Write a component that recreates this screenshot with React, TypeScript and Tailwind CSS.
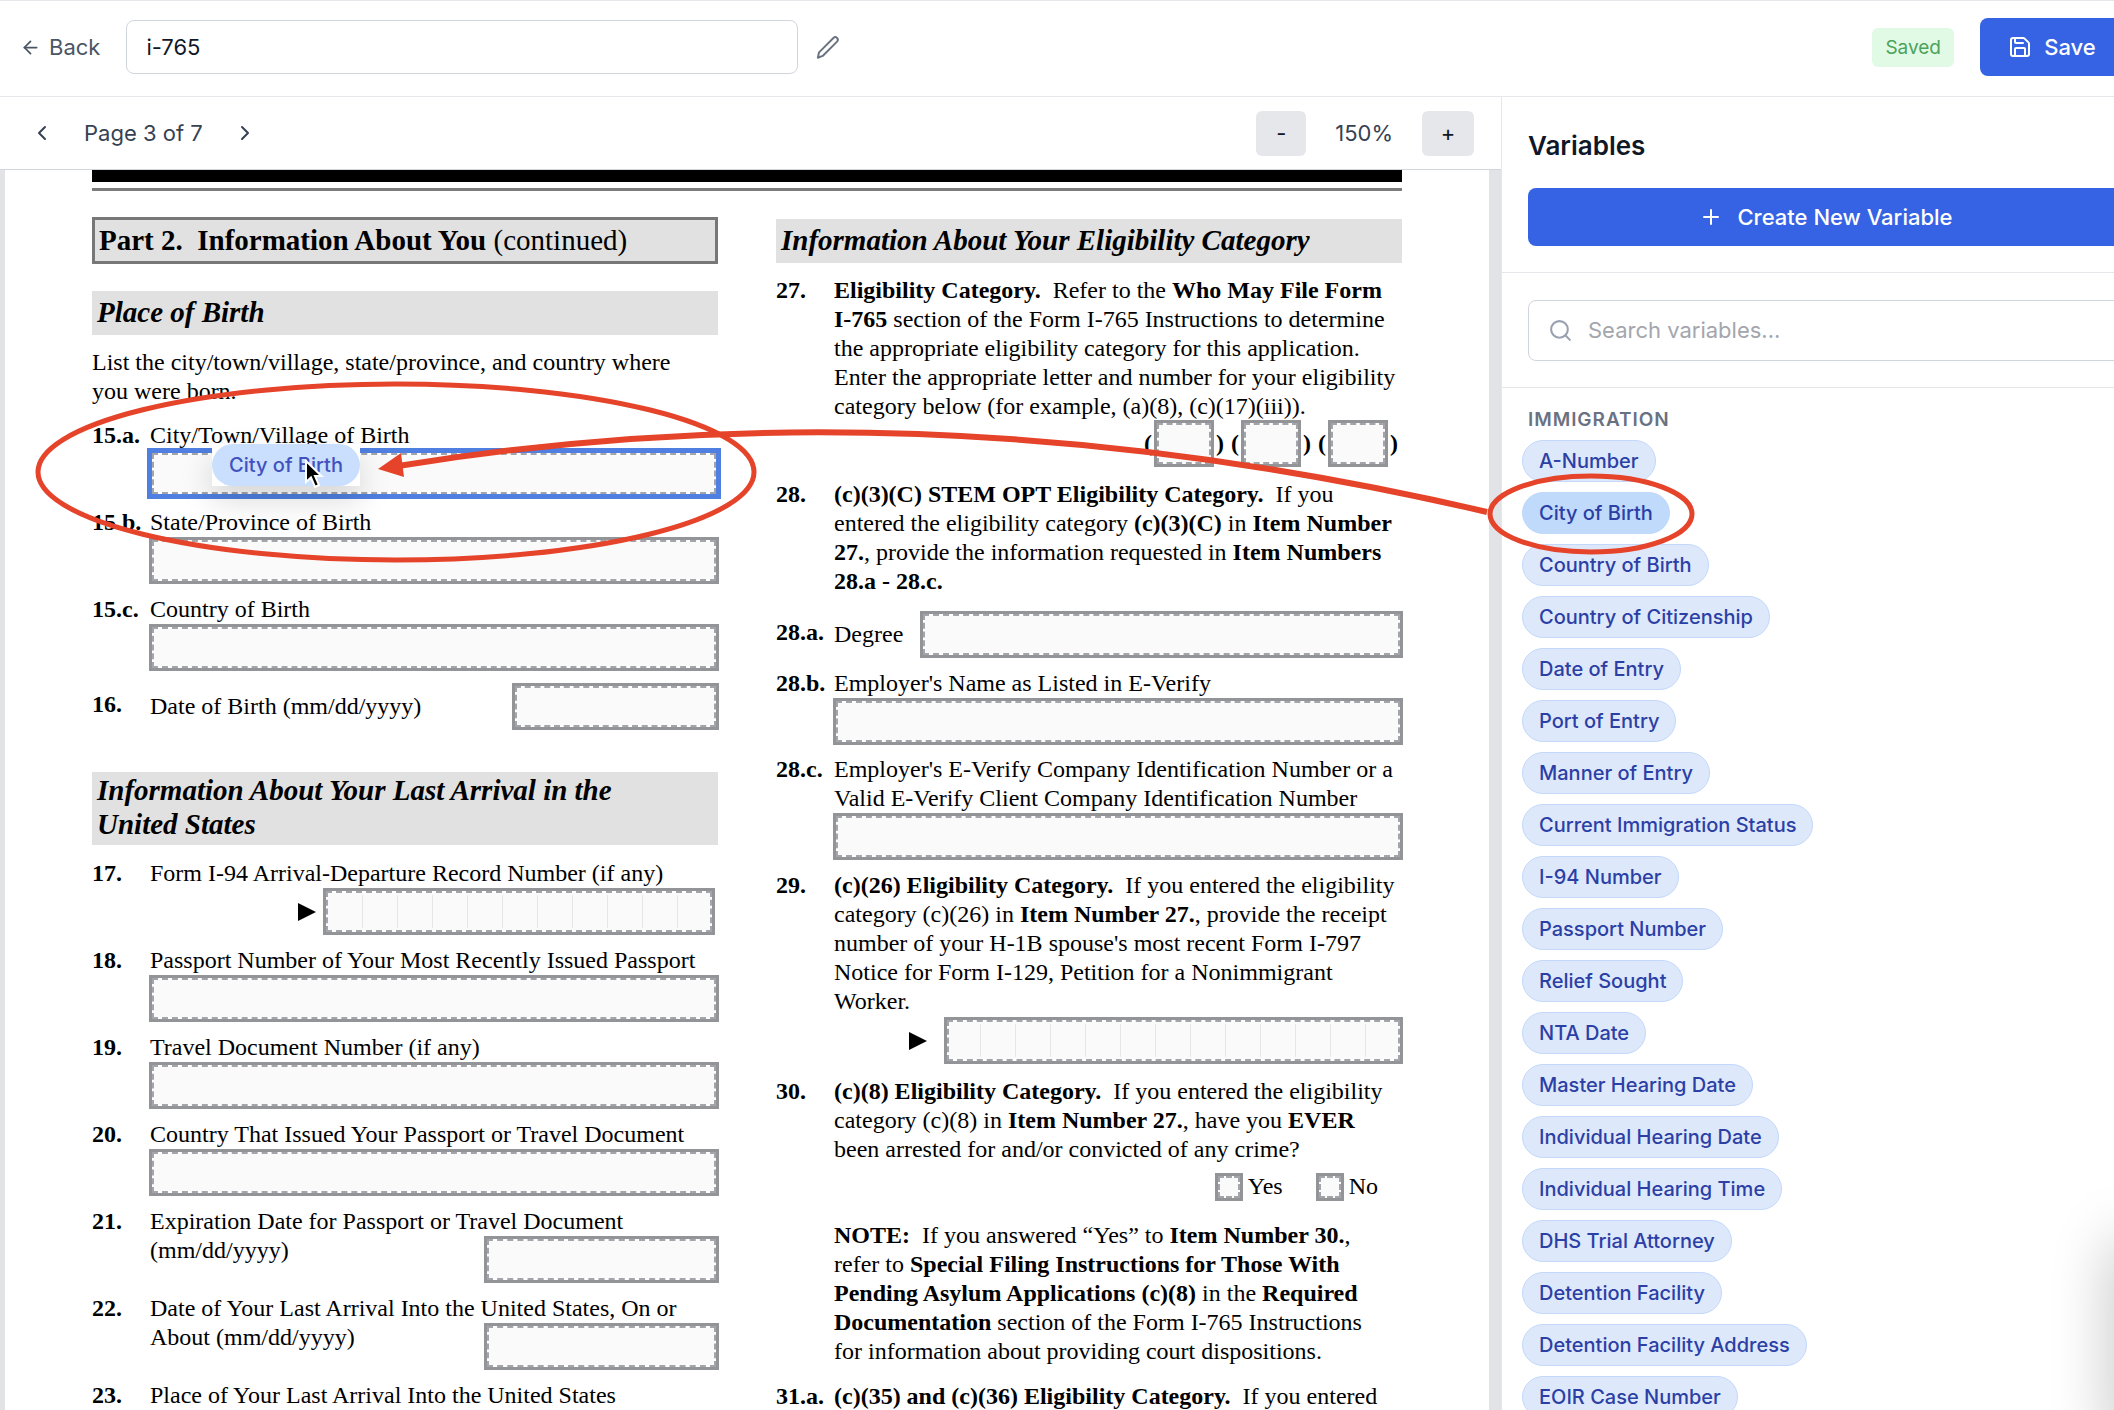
import React, { useState } from 'react';
import { ArrowLeft, ChevronLeft, ChevronRight, Plus, Save, Search } from 'lucide-react';
import clsx from 'clsx';

const immigrationVariables = [
  'A-Number',
  'City of Birth',
  'Country of Birth',
  'Country of Citizenship',
  'Date of Entry',
  'Port of Entry',
  'Manner of Entry',
  'Current Immigration Status',
  'I-94 Number',
  'Passport Number',
  'Relief Sought',
  'NTA Date',
  'Master Hearing Date',
  'Individual Hearing Date',
  'Individual Hearing Time',
  'DHS Trial Attorney',
  'Detention Facility',
  'Detention Facility Address',
  'EOIR Case Number',
];

interface PdfFieldProps {
  id: string;
  label?: string;
  className?: string;
  active?: boolean;
}

function PdfField({ id, label, className, active }: PdfFieldProps) {
  return (
    <input
      id={id}
      type="text"
      aria-label={label}
      className={clsx(
        'block h-[41px] border-2 border-dashed border-[#a3a5ab] bg-[#fafafa] bg-clip-padding px-2',
        active ? 'outline-5 outline-[#4f7fe0]' : 'outline-3 outline-[#929498]',
        className
      )}
    />
  );
}

interface CombFieldProps extends PdfFieldProps {
  cells: number;
}

// One text box with faint guides between the characters
function CombField({ id, label, className, cells }: CombFieldProps) {
  return (
    <div className={clsx('relative', className)}>
      <PdfField id={id} label={label} className="w-full" />
      <div className="pointer-events-none absolute inset-y-1 right-0 left-0 flex justify-end">
        {Array.from({ length: cells - 1 }, (_, i) => (
          <span key={i} className="w-[35px] border-l border-[#e6e6e9]" />
        ))}
      </div>
    </div>
  );
}

interface ItemProps {
  number: string;
  children: React.ReactNode;
  className?: string;
}

function Item({ number, children, className }: ItemProps) {
  return (
    <div className={clsx('flex', className)}>
      <b className="w-[58px] shrink-0">{number}</b>
      <div className="min-w-0 flex-1">{children}</div>
    </div>
  );
}

function SectionHeading({ children, className }: { children: React.ReactNode; className?: string }) {
  return (
    <h3 className={clsx('bg-[#e1e1e1] px-[5px] text-[29px] leading-[34px] font-bold italic', className)}>
      {children}
    </h3>
  );
}

function Triangle() {
  return (
    <svg width="18" height="18" viewBox="0 0 18 18" aria-hidden="true">
      <path d="M0 0 18 9 0 18Z" fill="#000" />
    </svg>
  );
}

function YesNoBox({ label }: { label: string }) {
  return (
    <label className="flex items-center gap-2">
      <input
        type="checkbox"
        className="size-[22px] appearance-none border-2 border-dashed border-[#a3a5ab] bg-[#fafafa] bg-clip-padding outline-3 outline-[#929498]"
      />
      {label}
    </label>
  );
}

function LeftColumn() {
  return (
    <div className="min-w-0 flex-1">
      <h2 className="border-3 border-[#777] bg-[#e1e1e1] px-1 text-[29px] leading-[41px] whitespace-nowrap">
        <b>Part 2.&nbsp; Information About You</b> (continued)
      </h2>
      <SectionHeading className="mt-[27px] pt-1 pb-[6px]">Place of Birth</SectionHeading>
      <p className="mt-[13px]">
        List the city/town/village, state/province, and country where
        <br />
        you were born.
      </p>

      <Item number="15.a." className="mt-[15px]">
        <label htmlFor="birth-city">City/Town/Village of Birth</label>
        <PdfField id="birth-city" active className="mt-[3px] ml-[2px] w-[564px]" />
      </Item>
      <Item number="15.b." className="mt-[14px]">
        <label htmlFor="birth-state">State/Province of Birth</label>
        <PdfField id="birth-state" className="mt-[3px] ml-[2px] w-[564px]" />
      </Item>
      <Item number="15.c." className="mt-[14px]">
        <label htmlFor="birth-country">Country of Birth</label>
        <PdfField id="birth-country" className="mt-[3px] ml-[2px] w-[564px]" />
      </Item>
      <Item number="16." className="mt-[22px]">
        <div className="flex items-center justify-between">
          <label htmlFor="birth-date">Date of Birth (mm/dd/yyyy)</label>
          <PdfField id="birth-date" className="-my-1 mr-[2px] w-[201px]" />
        </div>
      </Item>

      <SectionHeading className="mt-[49px] pt-px pb-1">
        Information About Your Last Arrival in the
        <br />
        United States
      </SectionHeading>

      <div className="mt-[14px] space-y-[14px]">
        <Item number="17.">
          <label htmlFor="i94">Form I-94 Arrival-Departure Record Number (if any)</label>
          <div className="mt-[3px] mr-[6px] flex items-center justify-end gap-[10px]">
            <Triangle />
            <CombField id="i94" cells={11} className="w-[386px]" />
          </div>
        </Item>
        <Item number="18.">
          <label htmlFor="passport" className="whitespace-nowrap">Passport Number of Your Most Recently Issued Passport</label>
          <PdfField id="passport" className="mt-[3px] ml-[2px] w-[564px]" />
        </Item>
        <Item number="19.">
          <label htmlFor="travel-doc">Travel Document Number (if any)</label>
          <PdfField id="travel-doc" className="mt-[3px] ml-[2px] w-[564px]" />
        </Item>
        <Item number="20.">
          <label htmlFor="issuer">Country That Issued Your Passport or Travel Document</label>
          <PdfField id="issuer" className="mt-[3px] ml-[2px] w-[564px]" />
        </Item>
        <Item number="21.">
          <label htmlFor="expiry">Expiration Date for Passport or Travel Document</label>
          <div className="flex items-start justify-between">
            <span>(mm/dd/yyyy)</span>
            <PdfField id="expiry" className="mt-[3px] mr-[2px] w-[229px]" />
          </div>
        </Item>
        <Item number="22.">
          <label htmlFor="last-arrival">Date of Your Last Arrival Into the United States, On or</label>
          <div className="flex items-start justify-between">
            <span>About (mm/dd/yyyy)</span>
            <PdfField id="last-arrival" className="mt-[3px] mr-[2px] w-[229px]" />
          </div>
        </Item>
        <Item number="23.">
          <label htmlFor="arrival-place">Place of Your Last Arrival Into the United States</label>
          <PdfField id="arrival-place" className="mt-[3px] ml-[2px] w-[564px]" />
        </Item>
      </div>
    </div>
  );
}

function RightColumn() {
  return (
    <div className="min-w-0 flex-1">
      <SectionHeading className="mt-[2px] pt-1 pb-[6px]">Information About Your Eligibility Category</SectionHeading>
      <Item number="27." className="mt-[13px] whitespace-nowrap">
        <p>
          <b>Eligibility Category.</b>&nbsp; Refer to the <b>Who May File Form</b>
          <br />
          <b>I-765</b> section of the Form I-765 Instructions to determine
          <br />
          the appropriate eligibility category for this application.
          <br />
          Enter the appropriate letter and number for your eligibility
          <br />
          category below (for example, (a)(8), (c)(17)(iii)).
        </p>
        <div className="mt-[2px] mr-1 flex items-center justify-end gap-[7px] font-bold">
          {['a', 'b', 'c'].map((part) => (
            <div key={part} className="flex items-center gap-[5px]">
              (
              <PdfField id={`category-${part}`} label={`Eligibility category ${part}`} className="w-[54px]" />
              )
            </div>
          ))}
        </div>
      </Item>
      <Item number="28." className="mt-4 whitespace-nowrap">
        <b>(c)(3)(C) STEM OPT Eligibility Category.</b>&nbsp; If you
        <br />
        entered the eligibility category <b>(c)(3)(C)</b> in <b>Item Number</b>
        <br />
        <b>27.</b>, provide the information requested in <b>Item Numbers</b>
        <br />
        <b>28.a - 28.c.</b>
      </Item>
      <Item number="28.a." className="mt-[22px]">
        <div className="flex items-center justify-between">
          <label htmlFor="degree">Degree</label>
          <PdfField id="degree" className="-my-1 mr-[2px] w-[477px]" />
        </div>
      </Item>
      <Item number="28.b." className="mt-[18px]">
        <label htmlFor="employer">Employer's Name as Listed in E-Verify</label>
        <PdfField id="employer" className="mt-[3px] ml-[2px] w-[564px]" />
      </Item>
      <Item number="28.c." className="mt-[13px] whitespace-nowrap">
        <label htmlFor="everify" className="block">
          Employer's E-Verify Company Identification Number or a
          <br />
          Valid E-Verify Client Company Identification Number
        </label>
        <PdfField id="everify" className="mt-[3px] ml-[2px] w-[564px]" />
      </Item>
      <Item number="29." className="mt-[14px] whitespace-nowrap">
        <label htmlFor="receipt" className="block">
          <b>(c)(26) Eligibility Category.</b>&nbsp; If you entered the eligibility
          <br />
          category (c)(26) in <b>Item Number 27.</b>, provide the receipt
          <br />
          number of your H-1B spouse's most recent Form I-797
          <br />
          Notice for Form I-129, Petition for a Nonimmigrant
          <br />
          Worker.
        </label>
        <div className="mt-1 mr-[2px] flex items-center justify-end gap-5">
          <Triangle />
          <CombField id="receipt" cells={13} className="w-[453px]" />
        </div>
      </Item>
      <Item number="30." className="mt-4 whitespace-nowrap">
        <b>(c)(8) Eligibility Category.</b>&nbsp; If you entered the eligibility
        <br />
        category (c)(8) in <b>Item Number 27.</b>, have you <b>EVER</b>
        <br />
        been arrested for and/or convicted of any crime?
        <div className="mt-2 mr-6 flex justify-end gap-9">
          <YesNoBox label="Yes" />
          <YesNoBox label="No" />
        </div>
        <p className="mt-5">
          <b>NOTE:</b>&nbsp; If you answered “Yes” to <b>Item Number 30.</b>,
          <br />
          refer to <b>Special Filing Instructions for Those With</b>
          <br />
          <b>Pending Asylum Applications (c)(8)</b> in the <b>Required</b>
          <br />
          <b>Documentation</b> section of the Form I-765 Instructions
          <br />
          for information about providing court dispositions.
        </p>
      </Item>
      <Item number="31.a." className="mt-4 whitespace-nowrap">
        <b>(c)(35) and (c)(36) Eligibility Category.</b>&nbsp; If you entered
      </Item>
    </div>
  );
}

// Hand-drawn callouts that point from the variable to its field
function Annotations() {
  return (
    <svg className="pointer-events-none absolute top-0 left-0 size-full overflow-visible" fill="none" stroke="#e5432a" strokeWidth="5" aria-hidden="true">
      <ellipse cx="396" cy="472" rx="358" ry="88" />
      <ellipse cx="1591" cy="514" rx="101" ry="38" />
      <path d="M1487 512C1128 428 762 407 398 466" strokeWidth="6" />
      <path d="M378 469 401 453 404 477Z" fill="#e5432a" stroke="none" />
    </svg>
  );
}

export default function App() {
  const [name, setName] = useState('i-765');
  const [search, setSearch] = useState('');

  return (
    <div className="relative h-screen overflow-hidden bg-white font-[Inter,sans-serif] text-[22px] text-gray-700">
      <div className="-mr-8 flex h-full flex-col">
        <header className="flex h-[97px] shrink-0 items-center border-t border-b border-gray-200 pr-[22px] pb-[3px] pl-5">
          <button className="flex items-center gap-2 text-gray-600">
            <ArrowLeft size={21} strokeWidth={2} />
            Back
          </button>
          <input
            aria-label="Form name"
            value={name}
            onChange={(e) => setName(e.target.value)}
            className="ml-[26px] h-[54px] w-[672px] rounded-lg border border-gray-300 px-[19px] text-gray-900"
          />
          <button aria-label="Rename" className="ml-[15px] text-gray-500">
            <svg width="29" height="29" viewBox="0 0 24 24" fill="none" stroke="currentColor" strokeWidth="1.6" strokeLinejoin="round">
              <path d="M16.9 4.1a2.1 2.1 0 0 1 3 3L8 19l-4 1.5L5 16z" />
            </svg>
          </button>
          <span className="ml-auto rounded-md bg-[#e1fae6] px-[13px] text-[19px] leading-[39px] text-[#4ba35a]">Saved</span>
          <button className="ml-[26px] flex h-[58px] w-36 items-center justify-center gap-3 rounded-lg bg-[#3563e4] font-medium text-white">
            <Save size={24} strokeWidth={2} />
            Save
          </button>
        </header>

        <div className="flex min-h-0 flex-1">
          <main className="flex min-w-0 flex-1 flex-col">
            <div className="flex h-[73px] shrink-0 items-center border-b border-gray-300 pr-[27px] pl-[30px]">
              <button aria-label="Previous page">
                <ChevronLeft size={24} strokeWidth={2} />
              </button>
              <span className="mx-[30px]">Page 3 of 7</span>
              <button aria-label="Next page">
                <ChevronRight size={24} strokeWidth={2} />
              </button>
              <button className="ml-auto h-[45px] w-[50px] rounded-md bg-gray-200 text-gray-900">-</button>
              <span className="mx-[29px]">150%</span>
              <button className="h-[45px] w-[52px] rounded-md bg-gray-200 text-gray-900">+</button>
            </div>

            <div className="min-h-0 flex-1 overflow-hidden bg-[#e1e3e6] pr-3 pl-[5px]">
              <div className="bg-white px-[87px] font-['Liberation_Serif',serif] text-[24px] leading-[29px] text-black">
                <div className="h-3 bg-black" />
                <div className="mt-[6px] h-[3px] bg-[#7d7d7d]" />
                <div className="mt-[26px] flex gap-[58px]">
                  <LeftColumn />
                  <RightColumn />
                </div>
              </div>
            </div>
          </main>

          <aside className="w-[645px] shrink-0 overflow-hidden border-l border-gray-200">
            <div className="border-b border-gray-200 pt-[31px] pr-[22px] pb-[26px] pl-[26px]">
              <h2 className="text-[26px] leading-9 font-semibold text-gray-900">Variables</h2>
              <button className="mt-6 flex h-[58px] w-full items-center justify-center gap-[14px] rounded-lg bg-[#3563e4] font-medium text-white">
                <Plus size={24} strokeWidth={2} />
                Create New Variable
              </button>
            </div>
            <div className="border-b border-gray-200 pt-[27px] pr-[22px] pb-[26px] pl-[26px]">
              <label className="flex h-[61px] items-center gap-[15px] rounded-lg border border-gray-300 px-[19px]">
                <Search size={25} strokeWidth={2} className="text-gray-400" />
                <input
                  type="search"
                  aria-label="Search variables"
                  placeholder="Search variables..."
                  value={search}
                  onChange={(e) => setSearch(e.target.value)}
                  className="min-w-0 flex-1 outline-none placeholder:text-[#a3a6ad]"
                />
              </label>
            </div>
            <h3 className="mt-[18px] ml-[26px] text-[19px] leading-7 font-semibold tracking-wider text-gray-500">IMMIGRATION</h3>
            <ul className="mt-[6px] ml-5 space-y-[10px]">
              {immigrationVariables.map((variable) => (
                <li key={variable} className="flex">
                  <button
                    className={clsx(
                      'h-[42px] rounded-full border px-4 text-[20px] font-medium text-[#2b3fa5]',
                      variable === 'City of Birth' ? 'border-[#c0dafc] bg-[#c0dafc]' : 'border-[#c3d8fb] bg-[#dee8fb]'
                    )}
                  >
                    {variable}
                  </button>
                </li>
              ))}
            </ul>
          </aside>
        </div>
      </div>

      {/* variable being dragged onto the field */}
      <div className="absolute top-[444px] left-[212px] bg-white shadow-[0_14px_32px_rgba(0,0,0,0.15)]">
        <div className="flex h-[42px] w-[148px] items-center justify-center rounded-full bg-[#c9dffd] text-[20px] font-medium text-[#4252bd]">
          City of Birth
        </div>
      </div>
      <Annotations />
      <svg className="absolute top-[459px] left-[304px]" width="20" height="30" viewBox="0 0 20 30" aria-hidden="true">
        <path d="M2 2V23L7 18.500 11 28 15 26 11 17H17.500Z" fill="#000" stroke="#fff" strokeWidth="2" />
      </svg>
      <div className="absolute top-[1240px] -right-10 -bottom-10 w-10 rounded-xl shadow-[0_0_60px_rgba(0,0,0,0.28)]" />
    </div>
  );
}
